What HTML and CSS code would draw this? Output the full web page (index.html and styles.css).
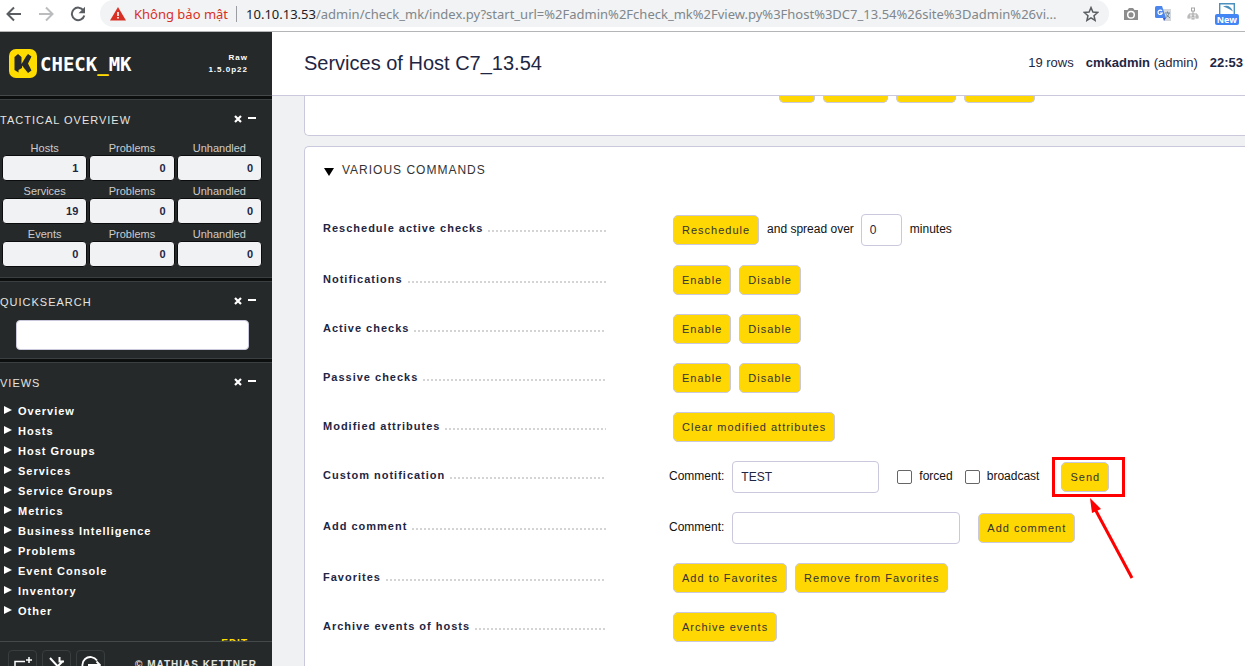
FILE: index.html
```html
<!DOCTYPE html>
<html lang="en">
<head>
<meta charset="utf-8">
<title>Services of Host C7_13.54</title>
<link rel="stylesheet" href="styles.css">
</head>
<body>
<header class="browser">
  <nav class="browser-nav">
    <svg width="16" height="16" viewBox="0 0 16 16" fill="none" stroke="#5a5e63" stroke-width="2"><path d="M15 8H2M8 1.5 1.5 8 8 14.500"/></svg>
    <svg width="16" height="16" viewBox="0 0 16 16" fill="none" stroke="#babcbe" stroke-width="2"><path d="M1 8h13M8 1.500 14.500 8 8 14.500"/></svg>
    <svg width="16" height="16" viewBox="0 0 16 16" fill="none" stroke="#5a5e63" stroke-width="2"><path d="M13.500 4.500A6.300 6.300 0 1 0 14.300 9.500"/><path d="M15 .8v6.400H8.600z" fill="#5a5e63" stroke="none"/></svg>
  </nav>
  <div class="address">
    <svg width="16" height="14" viewBox="0 0 16 14"><path d="M8 0 16 13.500H0z" fill="#d93025"/><path d="M7.200 5h1.600v4H7.200zM7.200 10h1.600v1.600H7.200z" fill="#fff"/></svg>
    <span class="insecure">Không bảo mật</span>
    <span class="divider"></span>
    <span class="url"><span class="host">10.10.13.53</span>/admin/check_mk/index.py?start_url=%2Fadmin%2Fcheck_mk%2Fview.py%3Fhost%3DC7_13.54%26site%3Dadmin%26vi...</span>
    <svg class="star" width="16" height="16" viewBox="0 0 16 16" fill="none" stroke="#5a5e63" stroke-width="1.500"><path d="m8 1.600 1.900 4.500 4.800.4-3.700 3.200 1.100 4.700L8 11.900l-4.100 2.500L5 9.700 1.300 6.500l4.800-.4z"/></svg>
  </div>
  <div class="extensions">
    <svg width="16" height="16" viewBox="0 0 16 16"><path d="M1 4h3.500L6 2h4l1.500 2H15v10H1z" fill="#8d8d8d"/><circle cx="8" cy="8.800" r="3.300" fill="#8d8d8d" stroke="#fff" stroke-width="1.500"/></svg>
    <svg width="16" height="16" viewBox="0 0 16 16"><path d="M6 3h10v12H9z" fill="#d4d7db"/><path d="M10 7h5M12.500 5.500V7M14 7c-.5 2.500-2 4-3.500 5M11 8.500l4 3.500" stroke="#6b87a0" fill="none"/><path d="M0 1.500Q0 0 1.500 0H7l4 12H1.500Q0 12 0 10.500z" fill="#4a86ee"/><path d="M8 12h3l-2 3z" fill="#3a5ac8"/><path d="M7 5a2.200 2.200 0 1 0 .3 2H5" stroke="#fff" stroke-width="1.200" fill="none"/></svg>
    <svg width="12" height="14" viewBox="0 0 12 14" fill="none" stroke="#a5a5a5"><rect x="4.500" y="1" width="3" height="3"/><path d="M6 4v6M2 9V7h8v2"/><rect x="1" y="9" width="2" height="2"/><rect x="5" y="9" width="2" height="3"/><rect x="9" y="9" width="2" height="2"/></svg>
    <span class="ext-new"><svg width="16" height="11" viewBox="0 0 16 11"><path d="M.7 11V.7h14.600V11" fill="#fff" stroke="#4a8fbd" stroke-width="1.400"/><path d="M4 3.500c4-2 8-.5 10 5-3-2.500-6-3.500-10-5z" fill="#4a8fbd"/></svg><b>New</b></span>
  </div>
</header>
<div class="app">
  <aside class="sidebar">
    <div class="side-head">
      <svg width="28" height="29" viewBox="0 0 28 29"><rect width="28" height="29" rx="7" fill="#ffdc00"/><path d="M5.500 8 9 5l3.500 3v7L17 7.500 19 5l3.500 2.500-3.500 7 3.500 7L19 24l-6-7.500V19l-3.500 2v2.500l-4-2.500z" fill="#26292a"/></svg>
      <span class="brand">CHECK<i>_</i>MK</span>
      <span class="version">Raw<br>1.5.0p22</span>
    </div>
    <div class="snapins">
      <section class="snapin tactical">
        <h2>TACTICAL OVERVIEW <span class="tools"><button aria-label="Close"><svg width="8" height="8" viewBox="0 0 8 8"><path d="m1 1 6 6M7 1 1 7" stroke="#fff" stroke-width="2.200"/></svg></button><button class="minus" aria-label="Minimize"></button></span></h2>
        <table>
          <tr><th>Hosts</th><th>Problems</th><th>Unhandled</th></tr>
          <tr><td>1</td><td>0</td><td>0</td></tr>
          <tr><th>Services</th><th>Problems</th><th>Unhandled</th></tr>
          <tr><td>19</td><td>0</td><td>0</td></tr>
          <tr><th>Events</th><th>Problems</th><th>Unhandled</th></tr>
          <tr><td>0</td><td>0</td><td>0</td></tr>
        </table>
      </section>
      <section class="snapin search">
        <h2>QUICKSEARCH <span class="tools"><button aria-label="Close"><svg width="8" height="8" viewBox="0 0 8 8"><path d="m1 1 6 6M7 1 1 7" stroke="#fff" stroke-width="2.200"/></svg></button><button class="minus" aria-label="Minimize"></button></span></h2>
        <input type="text" class="quick" aria-label="Quicksearch">
      </section>
      <section class="snapin views">
        <h2>VIEWS <span class="tools"><button aria-label="Close"><svg width="8" height="8" viewBox="0 0 8 8"><path d="m1 1 6 6M7 1 1 7" stroke="#fff" stroke-width="2.200"/></svg></button><button class="minus" aria-label="Minimize"></button></span></h2>
        <ul>
          <li><a href="#">Overview</a></li>
          <li><a href="#">Hosts</a></li>
          <li><a href="#">Host Groups</a></li>
          <li><a href="#">Services</a></li>
          <li><a href="#">Service Groups</a></li>
          <li><a href="#">Metrics</a></li>
          <li><a href="#">Business Intelligence</a></li>
          <li><a href="#">Problems</a></li>
          <li><a href="#">Event Console</a></li>
          <li><a href="#">Inventory</a></li>
          <li><a href="#">Other</a></li>
        </ul>
        <a href="#" class="edit">EDIT</a>
      </section>
    </div>
    <footer class="side-foot">
      <button aria-label="Add snapin"><svg width="20" height="20" viewBox="0 0 20 20" fill="none" stroke="#fff" stroke-width="1.500"><path d="M12 6.500H2v8h14V11M13 5h6M16 2v6"/></svg></button>
      <button aria-label="Settings"><svg width="20" height="20" viewBox="0 0 20 20" fill="none" stroke="#fff" stroke-width="2"><path d="m3 3 12 13M16 6 6 16M12.500 2v4.500H17"/></svg></button>
      <button aria-label="Log out"><svg width="20" height="20" viewBox="0 0 20 20" fill="none" stroke="#fff" stroke-width="1.800"><path d="M16 5.500A8 8 0 1 0 16 14.500M7 10h12M15.500 6.500 19 10l-3.500 3.500"/></svg></button>
      <a href="#">© MATHIAS KETTNER</a>
    </footer>
  </aside>
  <main class="main">
    <div class="title-bar">
      <h1>Services of Host C7_13.54</h1>
      <div class="status"><span>19 rows</span><span><b>cmkadmin</b> (admin)</span><b>22:53</b></div>
    </div>
    <section class="card card-cut">
      <div class="cut-row"><button class="w36"></button><button class="w65"></button><button class="w60"></button><button class="w71"></button></div>
    </section>
    <section class="card commands">
      <h3>VARIOUS COMMANDS</h3>
      <form class="rows">
        <div class="row"><div class="legend">Reschedule active checks</div><div class="controls"><button type="button" class="btn">Reschedule</button><label for="spread">and spread over</label><input id="spread" class="field tiny" type="text" value="0"><span>minutes</span></div></div>
        <div class="row"><div class="legend">Notifications</div><div class="controls"><button type="button" class="btn">Enable</button><button type="button" class="btn">Disable</button></div></div>
        <div class="row"><div class="legend">Active checks</div><div class="controls"><button type="button" class="btn">Enable</button><button type="button" class="btn">Disable</button></div></div>
        <div class="row"><div class="legend">Passive checks</div><div class="controls"><button type="button" class="btn">Enable</button><button type="button" class="btn">Disable</button></div></div>
        <div class="row"><div class="legend">Modified attributes</div><div class="controls"><button type="button" class="btn">Clear modified attributes</button></div></div>
        <div class="row"><div class="legend">Custom notification</div><div class="controls"><label class="lead" for="note">Comment:</label><input id="note" class="field short" type="text" value="TEST"><input id="forced" type="checkbox" class="check first"><label for="forced">forced</label><input id="broadcast" type="checkbox" class="check"><label for="broadcast">broadcast</label>
          <span class="send"><button type="button" class="btn">Send</button><span class="frame"></span><svg class="arrow" width="46" height="82" viewBox="0 0 46 82"><path d="M44 80 7 11" stroke="#f00" stroke-width="3"/><path d="m2 0 11 11-9 4z" fill="#f00"/></svg></span></div></div>
        <div class="row"><div class="legend">Add comment</div><div class="controls"><label class="lead" for="comment">Comment:</label><input id="comment" class="field long" type="text"><button type="button" class="btn spaced">Add comment</button></div></div>
        <div class="row"><div class="legend">Favorites</div><div class="controls"><button type="button" class="btn">Add to Favorites</button><button type="button" class="btn">Remove from Favorites</button></div></div>
        <div class="row"><div class="legend">Archive events of hosts</div><div class="controls"><button type="button" class="btn">Archive events</button></div></div>
      </form>
    </section>
  </main>
</div>
</body>
</html>
```

FILE: styles.css
```css
* { box-sizing: border-box; }
body {
  margin: 0;
  height: 100vh;
  display: flex;
  flex-direction: column;
  overflow: hidden;
  font: 12px "Liberation Sans", Arial, sans-serif;
  color: #111;
}
button { border: 0; padding: 0; background: none; font: inherit; }
a { text-decoration: none; }
h1, h2, h3, ul { margin: 0; padding: 0; font-weight: normal; }
svg { display: block; flex: none; }

/* Browser bar */
.browser {
  display: flex;
  flex: none;
  height: 32px;
  padding-bottom: 4px;
  border-bottom: 1px solid #b4b5b7;
  background: #fff;
}
.browser-nav { display: flex; align-items: center; gap: 16px; padding: 0 14px 0 6px; }
.address {
  flex: 1;
  min-width: 0;
  display: flex;
  align-items: center;
  padding: 0 10px;
  border-radius: 14px;
  background: #f1f3f4;
  font: 13px "Noto Sans", "Open Sans", sans-serif;
  color: #80868b;
}
.insecure { margin-left: 8px; color: #d93025; white-space: nowrap; }
.divider { width: 1px; height: 16px; margin: 0 9px 0 8px; background: #9a9da1; }
.url { flex: 1; min-width: 0; overflow: hidden; white-space: nowrap; }
.host { color: #202124; }
.star { margin-left: 8px; }
.extensions { display: flex; align-items: center; gap: 16px; padding: 0 6px 0 14px; }
.ext-new { display: flex; flex-direction: column; align-items: center; }
.ext-new b {
  padding: 0 2px;
  border-radius: 2px;
  background: #4285f4;
  color: #fff;
  font: bold 9px/11px "Open Sans", sans-serif;
}

.app { flex: 1; min-height: 0; display: flex; }

/* Sidebar */
.sidebar {
  flex: none;
  width: 272px;
  display: flex;
  flex-direction: column;
  background: #0d0f0f;
  color: #fff;
}
.side-head {
  flex: none;
  display: flex;
  align-items: center;
  height: 64px;
  padding: 0 24px 0 9px;
  background: #26292a;
  border-bottom: 1px solid #44494b;
}
.brand { margin-left: 3px; font: bold 19px "DejaVu Sans Mono", monospace; }
.brand i { color: #ffdc00; font-style: normal; }
.version { margin-left: auto; text-align: right; font-size: 8px; line-height: 12px; font-weight: bold; letter-spacing: 1px; }
.snapins { flex: 1; min-height: 0; overflow: hidden; padding-top: 3px; display: flex; flex-direction: column; gap: 3px; }
.snapin { flex: none; background: #26292a; border: solid #3a3f41; border-width: 1px 0; }
.snapin h2 {
  display: flex;
  justify-content: space-between;
  height: 38px;
  padding-right: 16px;
  font-size: 11px;
  line-height: 40px;
  letter-spacing: 1px;
  color: #e4e4e0;
}
.tools { display: flex; align-items: center; gap: 6px; }
.minus { width: 8px; height: 2px; margin-bottom: 2px; background: #fff; }
.tactical { padding-bottom: 10px; }
.tactical table { width: 264px; border-spacing: 2px 0; table-layout: fixed; font-size: 11px; }
.tactical th { height: 17px; padding: 2px 0 0; font-weight: normal; color: #ccc; }
.tactical td {
  height: 26px;
  padding: 0 8px;
  border: 1px solid #0b0c0c;
  border-radius: 4px;
  background: #f1f2f4;
  color: #1e2643;
  font-weight: bold;
  text-align: right;
}
.search { padding-bottom: 8px; }
.quick { display: block; width: 233px; height: 30px; margin-left: 16px; border: 1px solid #c9c8dc; border-radius: 4px; background: #fff; }
.views { padding-bottom: 12px; }
.views ul { list-style: none; padding-bottom: 16px; }
.views li { display: flex; align-items: center; height: 20px; padding-left: 4px; }
.views li::before { content: ""; border-left: 8px solid #fff; border-top: 4px solid transparent; border-bottom: 4px solid transparent; margin: 0 6px 2px 0; }
.views li a { color: #fff; font-size: 11px; font-weight: bold; letter-spacing: 1px; }
.views .edit { display: block; padding-right: 24px; text-align: right; font-size: 10px; line-height: 14px; font-weight: bold; letter-spacing: 1px; color: #ffdc00; }
.side-foot {
  flex: none;
  display: flex;
  align-items: flex-start;
  gap: 5px;
  height: 25px;
  padding: 8px 15px 0 8px;
  overflow: hidden;
  border-top: 1px solid #44494b;
  background: #26292a;
}
.side-foot button { width: 29px; height: 29px; padding: 4px; border: 1px solid #383d3f; border-radius: 4px; }
.side-foot a { margin-left: auto; color: #e4e4e0; font-size: 10px; line-height: 30px; font-weight: bold; letter-spacing: 1px; }

/* Main area */
.main { flex: 1; min-width: 0; display: flex; flex-direction: column; overflow: hidden; background: #f0f1f3; }
.title-bar {
  flex: none;
  display: flex;
  align-items: center;
  justify-content: space-between;
  height: 64px;
  padding: 0 2px 0 32px;
  border-bottom: 1px solid #c9c8dc;
  background: #fff;
}
.title-bar h1 { font-size: 20px; color: #1e2643; }
.status { display: flex; gap: 12px; padding-bottom: 2px; font-size: 13px; color: #1e2643; }
.card { flex: none; margin-left: 32px; border: 1px solid #c9c8dc; border-right: 0; border-radius: 5px 0 0 5px; background: #fff; }
.card-cut { border-top: 0; border-radius: 0 0 0 5px; padding-bottom: 32px; }
.cut-row { display: flex; gap: 8px; padding-left: 474px; }
.cut-row button { height: 7px; border: 1px solid #c9c8dc; border-top: 0; border-radius: 0 0 5px 5px; background: #ffd703; }
.w36 { width: 36px; }
.w65 { width: 65px; }
.w60 { width: 60px; }
.w71 { width: 71px; }
.commands { flex: 1 0 auto; margin-top: 10px; border-bottom: 0; border-bottom-left-radius: 0; padding: 12px 18px; }
.commands h3 { display: flex; align-items: center; height: 22px; font-size: 12px; letter-spacing: 1px; color: #333; }
.commands h3::before { content: ""; margin: 3px 8px 0 1px; border-top: 8px solid #000; border-left: 5px solid transparent; border-right: 5px solid transparent; }
.rows { display: flex; flex-direction: column; gap: 19px; padding-top: 33px; }
.row { display: grid; grid-template-columns: 284px 1fr; column-gap: 62px; align-items: start; }
.legend { display: flex; align-items: center; font-size: 11px; line-height: 28px; font-weight: bold; letter-spacing: 1px; color: #1e2643; white-space: nowrap; }
.legend::after {
  content: "";
  flex: 1;
  height: 2px;
  margin: 5px 1px 0 5px;
  background: repeating-linear-gradient(90deg, #d4d4d4 0 2px, transparent 2px 4px);
}
.controls { display: flex; align-items: center; white-space: nowrap; }
.controls label, .controls > span:not(.send) { margin: 0 4px; padding-bottom: 2px; }
.controls .lead { margin-left: 0; }
.btn {
  height: 30px;
  margin: 0 4px;
  padding: 0 8px;
  border: 1px solid #c9c8dc;
  border-radius: 5px;
  background: #ffd703;
  color: #333;
  font-size: 11px;
  letter-spacing: 1px;
}
.field { height: 32px; margin: 0 4px; padding: 0 8px; border: 1px solid #c9c8dc; border-radius: 4px; background: #fff; color: #1e2643; font: inherit; }
.tiny { width: 41px; margin-left: 3px; }
.short { width: 147px; }
.long { width: 228px; }
.check { appearance: none; width: 15px; height: 14px; margin: 0 3px 0 8px; border: 1px solid #666; border-radius: 2px; background: #fff; }
.first { margin-left: 14px; }
.spaced { margin-left: 14px; }
.send { position: relative; margin-left: 14px; }
.frame { position: absolute; left: -5px; top: -5px; width: 73px; height: 40px; border: 3px solid #f00; }
.arrow { position: absolute; left: 31px; top: 36px; }
```
